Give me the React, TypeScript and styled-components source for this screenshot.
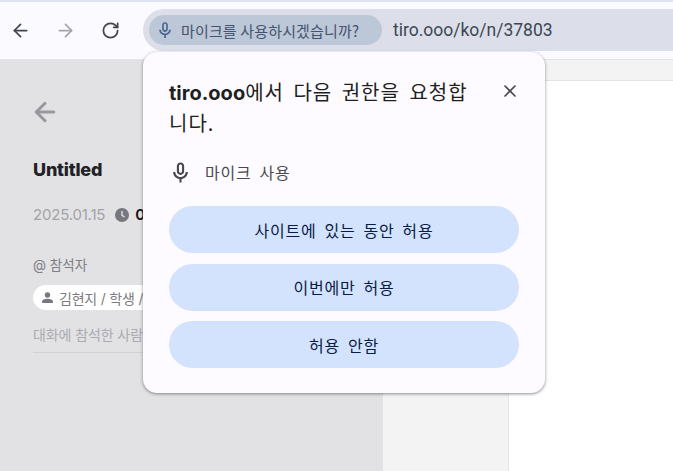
import styled, { createGlobalStyle } from "styled-components";
import { ArrowLeft, ArrowRight, RotateCw, X } from "lucide-react";

const GlobalStyle = createGlobalStyle`
  html, body {
    margin: 0;
    padding: 0;
    background: #fff;
  }
  * {
    box-sizing: border-box;
  }
`;

const KR = `"Noto Sans CJK KR", "Noto Sans", sans-serif`;

const Window = styled.div`
  position: relative;
  width: 673px;
  height: 471px;
  overflow: hidden;
  font-family: Inter, ${KR};
`;

const Toolbar = styled.header`
  height: 60px;
  display: flex;
  align-items: flex-start;
  padding: 9px 0 0 8px;
  background: #fbfbff;
  border-top: 2px solid #dfe3f4;
  border-bottom: 1px solid #e2e3ea;
`;

const NavButton = styled.button<{ $muted?: boolean }>`
  width: 24px;
  height: 24px;
  margin: 7px 21px 0 0;
  padding: 0;
  border: 0;
  background: none;
  display: flex;
  align-items: center;
  justify-content: center;
  color: ${(p) => (p.$muted ? "#a3a5ab" : "#42454e")};

  &:last-of-type {
    margin-right: 21px;
  }
`;

const Omnibox = styled.div`
  flex: 1;
  height: 42px;
  margin-top: -2px;
  display: flex;
  align-items: center;
  padding-left: 6px;
  background: #dcdfe9;
  border-radius: 21px 0 0 21px;
`;

const PermissionChip = styled.div`
  width: 233px;
  height: 30px;
  display: flex;
  align-items: center;
  gap: 7px;
  padding-left: 7px;
  background: #bcc7d7;
  border-radius: 15px;
  color: #44546f;
  font: 15px ${KR};
  letter-spacing: 0.15px;
  white-space: nowrap;
`;

const Url = styled.span`
  margin-left: 11px;
  font: 17.5px Roboto, "Open Sans", sans-serif;
  color: #3c4654;
`;

const Content = styled.main`
  height: 411px;
  display: grid;
  grid-template-columns: 383px 126px 1fr;
`;

const Sidebar = styled.section`
  padding: 37px 0 0 33px;
  background: #e2e2e4;
  color: #96969c;
`;

const BackLink = styled.div`
  height: 28px;
  margin-left: -3px;
  color: #98989e;
`;

const Title = styled.h1`
  margin: 34px 0 0;
  font-size: 18px;
  line-height: 22px;
  font-weight: 800;
  letter-spacing: -0.2px;
  color: #222226;
`;

const MetaRow = styled.div`
  margin-top: 25px;
  display: flex;
  align-items: center;
  gap: 9px;
  font-size: 15px;
  line-height: 18px;
  letter-spacing: -0.2px;
  color: #a2a2a8;
`;

const Duration = styled.span`
  margin-left: -4px;
  font-weight: 600;
  color: #111;
`;

const SectionLabel = styled.div`
  margin-top: 32px;
  font-size: 13.5px;
  line-height: 18px;
  color: #7e7e84;
`;

const ChipRow = styled.div`
  margin-top: 11px;
  display: flex;
`;

const PersonChip = styled.div`
  height: 25px;
  width: 220px;
  display: flex;
  align-items: center;
  gap: 5px;
  padding-left: 8px;
  border-radius: 13px;
  background: #fff;
  font-size: 14px;
  letter-spacing: -0.2px;
  color: #7b7b81;
`;

const Hint = styled.div`
  width: 320px;
  margin-top: 16px;
  padding-bottom: 8px;
  border-bottom: 1px solid #cfd1d9;
  font-size: 14px;
  line-height: 18px;
  letter-spacing: -0.1px;
  color: #aaaab0;
`;

const Gutter = styled.section`
  display: flex;
  flex-direction: column;
  background: #f3f3f3;
  border-right: 1px solid #e6e6e6;
`;

const GutterEnd = styled.div`
  flex: 1;
  margin-top: 20px;
  border-top: 1px solid #e3e3e7;
`;

const MainPane = styled.section`
  display: flex;
  flex-direction: column;
  background: #fff;
`;

const PaneHeader = styled.div`
  height: 21px;
  background: #f3f3f3;
  border-bottom: 1px solid #e3e3e7;
`;

const Popup = styled.div`
  position: absolute;
  left: 143px;
  top: 52px;
  width: 402px;
  height: 341px;
  padding: 25px 26px 0;
  background: #fdfbff;
  border-radius: 14px;
  box-shadow:
    0 1px 3px 1px rgba(60, 64, 67, 0.24),
    0 1px 2px rgba(60, 64, 67, 0.28);
`;

const PopupHead = styled.div`
  display: flex;
  align-items: flex-start;
  justify-content: space-between;
`;

const PopupTitle = styled.h2`
  width: 300px;
  margin: 0;
  font: 400 20px/30px ${KR};
  letter-spacing: 1px;
  word-spacing: 4px;
  color: #1f1f22;
  word-break: break-all;

  b {
    font-family: Inter, sans-serif;
    font-weight: 700;
    letter-spacing: 0;
  }
`;

const CloseButton = styled.button`
  width: 20px;
  height: 20px;
  margin: 4px -1px 0 0;
  padding: 0;
  border: 0;
  background: none;
  display: flex;
  align-items: center;
  justify-content: center;
  color: #46484e;
`;

const PermissionRow = styled.div`
  margin-top: 21px;
  display: flex;
  align-items: center;
  gap: 13px;
  height: 26px;
  font: 16px ${KR};
  letter-spacing: 0.8px;
  word-spacing: 3.5px;
  color: #4a4a50;
`;

const Actions = styled.div`
  margin-top: 21px;
  display: flex;
  flex-direction: column;
  gap: 10.5px;
`;

const ActionButton = styled.button`
  width: 350px;
  height: 47px;
  border: 0;
  border-radius: 24px;
  background: #d3e3fd;
  font: 16px ${KR};
  letter-spacing: 0.8px;
  word-spacing: 3.5px;
  color: #0a1c44;
`;

const MicGlyph = ({ size, color }: { size: number; color: string }) => (
  <svg width={size} height={size} viewBox="0 0 24 24" fill={color}>
    <path
      fillRule="evenodd"
      d="M12 14.500c-2.200 0-3.800-1.700-3.800-3.800V5.300C8.200 3.200 9.800 1.500 12 1.500s3.800 1.700 3.800 3.800v5.400c0 2.100-1.600 3.800-3.800 3.800zm0-10.800c-.9 0-1.600.7-1.600 1.600v5.400c0 .9.7 1.600 1.600 1.600s1.600-.7 1.600-1.600V5.300c0-.9-.7-1.600-1.600-1.600z"
    />
    <path d="M10.900 22.500v-3.700C7.200 18.300 4.300 15.200 4.300 11.500h2.300c0 3 2.400 5.200 5.400 5.200s5.400-2.200 5.400-5.200h2.300c0 3.700-2.900 6.800-6.600 7.300v3.700h-2.200z" />
  </svg>
);

const ClockGlyph = () => (
  <svg width="16" height="16" viewBox="0 0 16 16">
    <circle cx="8" cy="8" r="7" fill="#77777f" />
    <path d="M8 4v4.4l2.6 1.6" fill="none" stroke="#e2e2e4" strokeWidth="1.4" />
  </svg>
);

const PersonGlyph = () => (
  <svg width="13" height="13" viewBox="0 0 24 24" fill="#77777d">
    <circle cx="12" cy="7.5" r="5" />
    <path d="M2 22v-2.5C2 16 8 14.5 12 14.5s10 1.500 10 5V22z" />
  </svg>
);

export default function App() {
  return (
    <Window>
      <GlobalStyle />
      <Toolbar>
        <NavButton>
          <ArrowLeft size={21} strokeWidth={2} />
        </NavButton>
        <NavButton $muted>
          <ArrowRight size={21} strokeWidth={2} />
        </NavButton>
        <NavButton>
          <RotateCw size={19} strokeWidth={2.2} />
        </NavButton>
        <Omnibox>
          <PermissionChip>
            <MicGlyph size={18} color="#4a6590" />
            마이크를 사용하시겠습니까?
          </PermissionChip>
          <Url>tiro.ooo/ko/n/37803</Url>
        </Omnibox>
      </Toolbar>
      <Content>
        <Sidebar>
          <BackLink>
            <ArrowLeft size={30} strokeWidth={2.4} />
          </BackLink>
          <Title>Untitled</Title>
          <MetaRow>
            2025.01.15
            <ClockGlyph />
            <Duration>0</Duration>
          </MetaRow>
          <SectionLabel>@ 참석자</SectionLabel>
          <ChipRow>
            <PersonChip>
              <PersonGlyph />
              김현지 / 학생 /
            </PersonChip>
          </ChipRow>
          <Hint>대화에 참석한 사람</Hint>
        </Sidebar>
        <Gutter>
          <GutterEnd />
        </Gutter>
        <MainPane>
          <PaneHeader />
        </MainPane>
      </Content>
      <Popup>
        <PopupHead>
          <PopupTitle>
            <b>tiro.ooo</b>에서 다음 권한을 요청합니다.
          </PopupTitle>
          <CloseButton>
            <X size={20} strokeWidth={2} />
          </CloseButton>
        </PopupHead>
        <PermissionRow>
          <MicGlyph size={23} color="#47474d" />
          마이크 사용
        </PermissionRow>
        <Actions>
          <ActionButton>사이트에 있는 동안 허용</ActionButton>
          <ActionButton>이번에만 허용</ActionButton>
          <ActionButton>허용 안함</ActionButton>
        </Actions>
      </Popup>
    </Window>
  );
}
